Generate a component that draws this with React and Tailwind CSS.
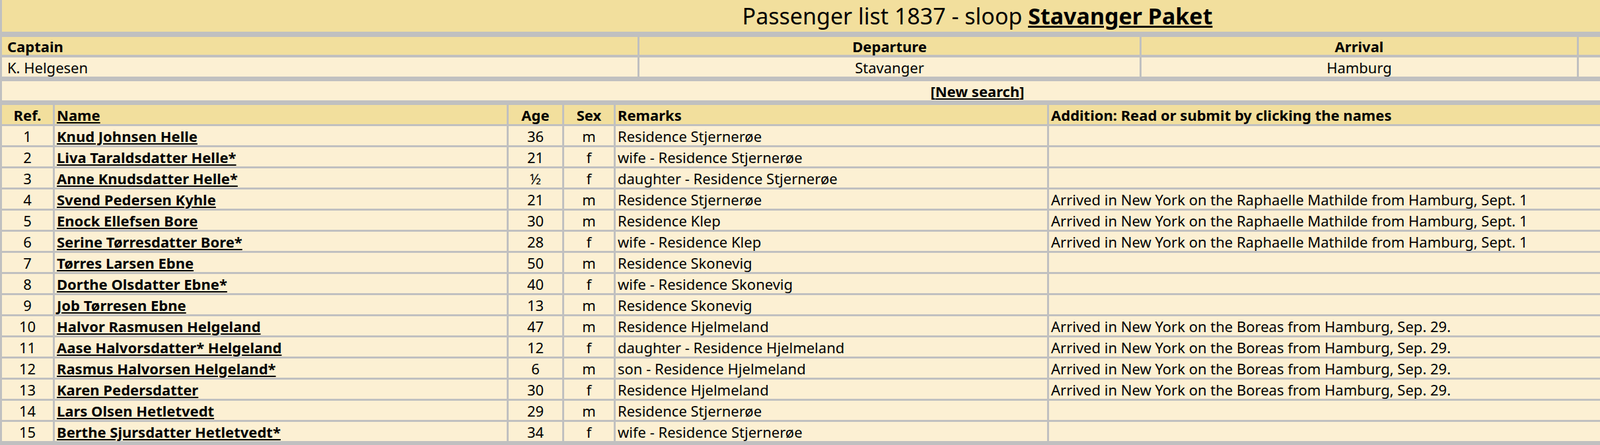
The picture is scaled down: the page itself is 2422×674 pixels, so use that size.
import React from "react";

const rows = [
  ["1", "Knud Johnsen Helle", "36", "m", "Residence Stjernerøe", ""],
  ["2", "Liva Taraldsdatter Helle*", "21", "f", "wife - Residence Stjernerøe", ""],
  ["3", "Anne Knudsdatter Helle*", "½", "f", "daughter - Residence Stjernerøe", ""],
  ["4", "Svend Pedersen Kyhle", "21", "m", "Residence Stjernerøe", "Arrived in New York on the Raphaelle Mathilde from Hamburg, Sept. 1"],
  ["5", "Enock Ellefsen Bore", "30", "m", "Residence Klep", "Arrived in New York on the Raphaelle Mathilde from Hamburg, Sept. 1"],
  ["6", "Serine Tørresdatter Bore*", "28", "f", "wife - Residence Klep", "Arrived in New York on the Raphaelle Mathilde from Hamburg, Sept. 1"],
  ["7", "Tørres Larsen Ebne", "50", "m", "Residence Skonevig", ""],
  ["8", "Dorthe Olsdatter Ebne*", "40", "f", "wife - Residence Skonevig", ""],
  ["9", "Job Tørresen Ebne", "13", "m", "Residence Skonevig", ""],
  ["10", "Halvor Rasmusen Helgeland", "47", "m", "Residence Hjelmeland", "Arrived in New York on the Boreas from Hamburg, Sep. 29."],
  ["11", "Aase Halvorsdatter* Helgeland", "12", "f", "daughter - Residence Hjelmeland", "Arrived in New York on the Boreas from Hamburg, Sep. 29."],
  ["12", "Rasmus Halvorsen Helgeland*", "6", "m", "son - Residence Hjelmeland", "Arrived in New York on the Boreas from Hamburg, Sep. 29."],
  ["13", "Karen Pedersdatter", "30", "f", "Residence Hjelmeland", "Arrived in New York on the Boreas from Hamburg, Sep. 29."],
  ["14", "Lars Olsen Hetletvedt", "29", "m", "Residence Stjernerøe", ""],
  ["15", "Berthe Sjursdatter Hetletvedt*", "34", "f", "wife - Residence Stjernerøe", ""],
];

const cols = "grid grid-cols-[77px_684px_81px_75px_653px_1px] gap-x-[3px]";

export default function App() {
  return (
    <div className="w-full h-[674px] overflow-hidden bg-[#c0c0c0] text-black font-['Liberation_Sans',Arial,sans-serif] text-[22px] leading-[26px]">
      <div className="w-[2956px] pl-[3px]">
        <div className="h-[48px] bg-[#f2df9d] flex items-center justify-center text-[34px]">
          <span>
            Passenger list 1837 - sloop <b className="underline">Stavanger Paket</b>
          </span>
        </div>

        <div className="mt-[8px] grid grid-cols-[962px_757px_659px_1fr] gap-[3px]">
          <div className="h-[27px] bg-[#f2df9d] font-bold px-[8px] flex items-center">Captain</div>
          <div className="h-[27px] bg-[#f2df9d] font-bold flex items-center justify-center">Departure</div>
          <div className="h-[27px] bg-[#f2df9d] font-bold flex items-center justify-center">Arrival</div>
          <div className="h-[27px] bg-[#f2df9d]"></div>
          <div className="h-[29px] mt-[1px] bg-[#fcf0d3] px-[8px] flex items-center">K. Helgesen</div>
          <div className="h-[29px] mt-[1px] bg-[#fcf0d3] flex items-center justify-center">Stavanger</div>
          <div className="h-[29px] mt-[1px] bg-[#fcf0d3] flex items-center justify-center">Hamburg</div>
          <div className="h-[29px] mt-[1px] bg-[#fcf0d3]"></div>
        </div>

        <div className="mt-[7px] h-[29px] bg-[#fcf0d3] flex items-center justify-center font-bold">
          <span>[<span className="underline">New search</span>]</span>
        </div>

        <div className="mt-[7px] grid grid-cols-[77px_684px_81px_75px_653px_1fr] gap-[3px]">
          <div className="h-[29px] bg-[#f2df9d] font-bold flex items-center justify-center">Ref.</div>
          <div className="h-[29px] bg-[#f2df9d] font-bold flex items-center px-[3px] underline">Name</div>
          <div className="h-[29px] bg-[#f2df9d] font-bold flex items-center justify-center">Age</div>
          <div className="h-[29px] bg-[#f2df9d] font-bold flex items-center justify-center">Sex</div>
          <div className="h-[29px] bg-[#f2df9d] font-bold flex items-center px-[3px]">Remarks</div>
          <div className="h-[29px] bg-[#f2df9d] font-bold flex items-center px-[3px]">Addition: Read or submit by clicking the names</div>
          {rows.map((r) => (
            <React.Fragment key={r[0]}>
              <div className="h-[29px] bg-[#fcf0d3] flex items-center justify-center">{r[0]}</div>
              <div className="h-[29px] bg-[#fcf0d3] flex items-center px-[3px] font-bold underline">{r[1]}</div>
              <div className="h-[29px] bg-[#fcf0d3] flex items-center justify-center">{r[2]}</div>
              <div className="h-[29px] bg-[#fcf0d3] flex items-center justify-center">{r[3]}</div>
              <div className="h-[29px] bg-[#fcf0d3] flex items-center px-[3px]">{r[4]}</div>
              <div className="h-[29px] bg-[#fcf0d3] flex items-center px-[3px]">{r[5]}</div>
            </React.Fragment>
          ))}
        </div>
      </div>
    </div>
  );
}
